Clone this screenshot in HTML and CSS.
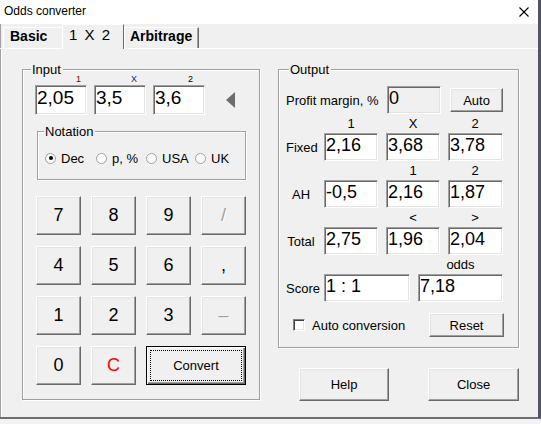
FILE: index.html
```html
<!DOCTYPE html>
<html lang="en">
<head>
    <meta charset="UTF-8">
    <title>Odds converter</title>
    <link rel="stylesheet" href="styles.css">
</head>
<body>
    <div class="window">
        <div class="titlebar">
            <span class="title">Odds converter</span>
            <svg class="close-icon" width="10" height="10" viewBox="0 0 10 10">
                <path d="M0.5 0.5 L9.5 9.5 M9.5 0.5 L0.5 9.5" stroke="#000" stroke-width="1.1" fill="none"/>
            </svg>
        </div>

        <div class="tabs">
            <div class="tab tab-basic">Basic</div>
            <div class="tab tab-active">1 X 2</div>
            <div class="tab tab-arb">Arbitrage</div>
        </div>

        <div class="panel">
            <!-- левая часть: ввод -->
            <div class="group group-input">
                <span class="group-title">Input</span>
                <div class="odds-row">
                    <div class="odds-cell">
                        <span class="odds-label lab-1">1</span>
                        <div class="tb tb-in">2,05</div>
                    </div>
                    <div class="odds-cell">
                        <span class="odds-label lab-x">X</span>
                        <div class="tb tb-in">3,5</div>
                    </div>
                    <div class="odds-cell odds-cell-last">
                        <span class="odds-label lab-2">2</span>
                        <div class="tb tb-in">3,6</div>
                    </div>
                    <span class="arrow"></span>
                </div>

                <div class="group group-notation">
                    <span class="group-title">Notation</span>
                    <div class="radios">
                        <label class="radio radio-dec"><span class="radio-mark checked"></span>Dec</label>
                        <label class="radio radio-p"><span class="radio-mark"></span>p, %</label>
                        <label class="radio radio-usa"><span class="radio-mark"></span>USA</label>
                        <label class="radio"><span class="radio-mark"></span>UK</label>
                    </div>
                </div>

                <div class="keypad">
                    <button class="btn key">7</button>
                    <button class="btn key">8</button>
                    <button class="btn key">9</button>
                    <button class="btn key key-dim">/</button>
                    <button class="btn key">4</button>
                    <button class="btn key">5</button>
                    <button class="btn key">6</button>
                    <button class="btn key key-comma">,</button>
                    <button class="btn key">1</button>
                    <button class="btn key">2</button>
                    <button class="btn key">3</button>
                    <button class="btn key key-dim">–</button>
                    <button class="btn key">0</button>
                    <button class="btn key key-red">C</button>
                    <button class="btn key-convert"><span class="focus-ring">Convert</span></button>
                </div>
            </div>

            <!-- правая часть: результат -->
            <div class="right-col">
                <div class="group group-output">
                    <span class="group-title">Output</span>
                    <div class="profit-row">
                        <span class="profit-label">Profit margin, %</span>
                        <div class="tb tb-out tb-margin">0</div>
                        <button class="btn btn-auto">Auto</button>
                    </div>

                    <div class="out-head">
                        <span class="head-cell">1</span>
                        <span class="head-cell">X</span>
                        <span class="head-cell">2</span>
                    </div>
                    <div class="out-row">
                        <span class="out-label">Fixed</span>
                        <div class="tb tb-out">2,16</div>
                        <div class="tb tb-out">3,68</div>
                        <div class="tb tb-out tb-wide">3,78</div>
                    </div>

                    <div class="out-head">
                        <span class="head-cell"></span>
                        <span class="head-cell">1</span>
                        <span class="head-cell">2</span>
                    </div>
                    <div class="out-row">
                        <span class="out-label">AH</span>
                        <div class="tb tb-out">-0,5</div>
                        <div class="tb tb-out">2,16</div>
                        <div class="tb tb-out tb-wide">1,87</div>
                    </div>

                    <div class="out-head">
                        <span class="head-cell"></span>
                        <span class="head-cell">&lt;</span>
                        <span class="head-cell">&gt;</span>
                    </div>
                    <div class="out-row">
                        <span class="out-label">Total</span>
                        <div class="tb tb-out">2,75</div>
                        <div class="tb tb-out">1,96</div>
                        <div class="tb tb-out tb-wide">2,04</div>
                    </div>

                    <div class="out-head">
                        <span class="head-cell head-score"></span>
                        <span class="head-cell head-odds">odds</span>
                    </div>
                    <div class="out-row">
                        <span class="out-label">Score</span>
                        <div class="tb tb-out tb-score">1 : 1</div>
                        <div class="tb tb-out tb-odds">7,18</div>
                    </div>

                    <div class="check-row">
                        <span class="check"></span>
                        <span class="check-text">Auto conversion</span>
                        <button class="btn btn-reset">Reset</button>
                    </div>
                </div>

                <div class="bottom-btns">
                    <button class="btn btn-big btn-help">Help</button>
                    <button class="btn btn-big btn-close">Close</button>
                </div>
            </div>
        </div>
    </div>
</body>
</html>
```

FILE: styles.css
```css
* {
    margin: 0;
    padding: 0;
    box-sizing: border-box;
}

body {
    width: 541px;
    height: 424px;
    overflow: hidden;
    background: #f3f3f3;
    font-family: "Liberation Sans", Arial, sans-serif;
    font-size: 13px;
    color: #000;
}

.window {
    width: 541px;
    height: 419px;
    display: flex;
    flex-direction: column;
    background: #f0f0f0;
    border-right: 3px solid #4d5566;
    border-bottom: 2px solid #6e6e6e;
}

/* заголовок окна */
.titlebar {
    height: 24px;
    flex-shrink: 0;
    display: flex;
    align-items: center;
    justify-content: space-between;
    padding: 0 9px 0 4px;
    background: #fff;
}

.title {
    font-size: 12px;
    line-height: 14px;
    margin-top: -2px;
}

.close-icon {
    margin-top: -1px;
}

/* вкладки */
.tabs {
    height: 25px;
    flex-shrink: 0;
    display: flex;
    align-items: flex-end;
    padding-left: 3px;
    border-bottom: 1px solid #fff;
    box-shadow: inset 1px 0 #a0a0a0;
}

.tab {
    height: 21px;
    border: 1px solid;
    border-bottom: 0;
    border-color: #fff #696969 transparent #fff;
    font-size: 14px;
    font-weight: bold;
    line-height: 17px;
    white-space: pre;
}

.tab-basic {
    width: 59px;
    padding-left: 6px;
    border-right: 0;
}

.tab-active {
    width: 62px;
    height: 25px;
    margin-bottom: -1px;
    padding-left: 6px;
    background: #f0f0f0;
    font-size: 15px;
    font-weight: normal;
    line-height: 20px;
    word-spacing: 3px;
}

.tab-arb {
    width: 75px;
    padding-left: 5px;
    box-shadow: inset -1px 0 #a0a0a0;
}

.panel {
    flex: 1;
    display: flex;
    box-shadow: inset 1px 0 #a0a0a0, inset 2px 0 #fff;
}

/* рамки групп */
.group {
    position: relative;
    border: 1px solid #a0a0a0;
    box-shadow: 1px 1px 0 #fff, inset 1px 1px 0 #fff;
}

.group-title {
    position: absolute;
    top: -8px;
    left: 8px;
    padding: 0 2px 0 1px;
    background: #f0f0f0;
    line-height: 15px;
}

.group-input {
    width: 238px;
    height: 331px;
    margin: 20px 0 0 22px;
    padding: 4px 0 0 12px;
}

.odds-row {
    display: flex;
    align-items: flex-end;
}

.odds-cell {
    width: 52px;
    margin-right: 7px;
    display: flex;
    flex-direction: column;
}

.odds-cell-last {
    margin-right: 0;
}

.odds-label {
    height: 11px;
    font-size: 9px;
    line-height: 11px;
    text-align: right;
}

.lab-1 { padding-right: 6px; color: #800000; }
.lab-x { padding-right: 9px; color: #202060; }
.lab-2 { padding-right: 12px; }

.arrow {
    width: 0;
    height: 0;
    margin: 0 0 7px 21px;
    border-right: 9px solid #6d6d6d;
    border-top: 8px solid transparent;
    border-bottom: 8px solid transparent;
}

/* текстовые поля */
.tb {
    background: #fff;
    border: 1px solid;
    border-color: #a0a0a0 #fff #fff #a0a0a0;
    box-shadow: inset 1px 1px #696969, inset -1px -1px #e3e3e3;
    white-space: pre;
    overflow: hidden;
    padding-left: 1px;
}

.tb-in {
    height: 30px;
    font-size: 19px;
    line-height: 23px;
}

.tb-out {
    width: 54px;
    height: 28px;
    font-size: 18px;
    line-height: 22px;
}

.tb-wide { width: 55px; }
.tb-margin { background: #f0f0f0; }
.tb-score { width: 86px; }
.tb-odds { width: 85px; }

.group-notation {
    width: 209px;
    height: 49px;
    margin: 16px 0 0 2px;
    padding: 19px 0 0 7px;
}

.group-notation .group-title {
    left: 6px;
}

.radios {
    height: 14px;
    display: flex;
    align-items: center;
}

.radio {
    display: flex;
    align-items: center;
}

.radio-dec { width: 51px; }
.radio-p { width: 50px; }
.radio-usa { width: 49px; }

.radio-mark {
    width: 11px;
    height: 11px;
    margin-right: 5px;
    border-radius: 50%;
    border: 1px solid #a0a0a0;
    background: #fff;
    display: flex;
    align-items: center;
    justify-content: center;
}

.radio-mark.checked::after {
    content: "";
    width: 4px;
    height: 4px;
    border-radius: 50%;
    background: #000;
}

/* кнопки */
.btn {
    display: flex;
    align-items: center;
    justify-content: center;
    background: #f0f0f0;
    border: 1px solid;
    border-color: #fff #696969 #696969 #fff;
    box-shadow: inset -1px -1px #a0a0a0, inset 1px 1px #e3e3e3;
    font-family: inherit;
    font-size: 13px;
    color: #000;
}

.keypad {
    margin: 16px 0 0 1px;
    display: grid;
    grid-template-columns: repeat(4, 45px);
    grid-auto-rows: 39px;
    column-gap: 10px;
    row-gap: 11px;
}

.key {
    font-size: 18px;
}

.key-dim {
    color: #a0a0a0;
    text-shadow: 1px 1px #fff;
}

.key-red {
    color: #f00;
}

.key-convert {
    grid-column: span 2;
    padding: 3px;
    border: 1px solid #000;
    box-shadow: inset 1px 1px #fff, inset -1px -1px #696969, inset -2px -2px #a0a0a0;
}

.focus-ring {
    flex: 1;
    height: 100%;
    display: flex;
    align-items: center;
    justify-content: center;
    border: 1px dotted #000;
}

.right-col {
    margin: 20px 0 0 18px;
}

.group-output {
    width: 241px;
    height: 279px;
    padding: 16px 14px 0 7px;
}

.group-output .group-title {
    left: 10px;
}

.profit-row {
    height: 28px;
    display: flex;
    align-items: center;
}

.profit-label {
    width: 101px;
}

.btn-auto {
    width: 53px;
    height: 24px;
    margin-left: 9px;
}

.out-head {
    height: 19px;
    display: flex;
    align-items: center;
    gap: 8px;
    padding-left: 38px;
}

.head-cell {
    width: 54px;
    text-align: center;
}

.head-score { width: 86px; }
.head-odds { width: 85px; }

.out-row {
    display: flex;
    align-items: center;
    gap: 8px;
}

.out-label {
    width: 30px;
    text-align: center;
}

.check-row {
    height: 24px;
    margin-top: 11px;
    display: flex;
    align-items: center;
}

.check {
    width: 12px;
    height: 12px;
    margin-left: 7px;
    background: #fff;
    border: 1px solid;
    border-color: #808080 #fff #fff #808080;
    box-shadow: inset 1px 1px #404040, inset -1px -1px #e3e3e3;
}

.check-text {
    margin-left: 7px;
}

.btn-reset {
    width: 75px;
    height: 24px;
    margin-left: auto;
}

.bottom-btns {
    display: flex;
    margin-top: 20px;
}

.btn-big {
    width: 90px;
    height: 33px;
}

.btn-help { margin-left: 21px; }
.btn-close { margin-left: 39px; width: 91px; }
```
